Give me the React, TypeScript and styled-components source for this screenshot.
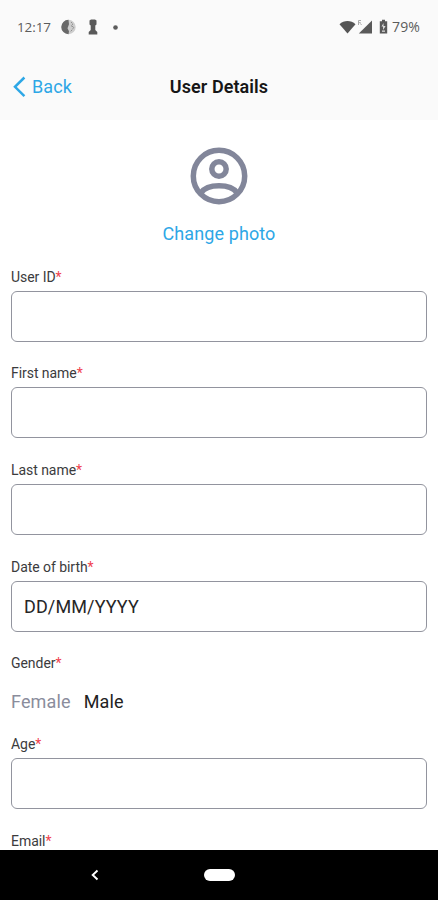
import React from "react";
import styled, { createGlobalStyle } from "styled-components";

const GlobalStyle = createGlobalStyle`
  * { box-sizing: border-box; }
  body { margin: 0; background: #fff; font-family: Roboto, sans-serif; }
`;

const Screen = styled.div`
  width: 438px;
  height: 900px;
  display: flex;
  flex-direction: column;
  overflow: hidden;
  background: #fff;
`;

const StatusBar = styled.div`
  height: 54px;
  flex: none;
  display: flex;
  align-items: center;
  justify-content: space-between;
  padding: 0 16px 0 17px;
  background: #fafafa;
  color: #5c5c5c;
  font: 500 14px/18px "Open Sans", sans-serif;
`;

const StatusGroup = styled.div`
  display: flex;
  align-items: center;
`;

const Clock = styled.span`
  width: 44px;
  font-size: 13.5px;
  letter-spacing: -0.1px;
  white-space: nowrap;
`;

const Percent = styled.span`
  width: 30px;
  margin-left: 4px;
  letter-spacing: 0.15px;
  white-space: nowrap;
`;

const StatusIcon = styled.svg<{ $gap?: number }>`
  display: block;
  flex: none;
  margin-left: ${({ $gap = 0 }) => $gap}px;
`;

const Header = styled.header`
  height: 66px;
  flex: none;
  display: grid;
  grid-template-columns: 1fr auto 1fr;
  align-items: center;
  padding: 0 12px;
  background: #fafafa;
`;

const BackButton = styled.button`
  display: flex;
  align-items: center;
  gap: 6px;
  padding: 0;
  border: 0;
  background: none;
  color: #2da7e6;
  font: 400 18px/24px Roboto, sans-serif;
  letter-spacing: 0.1px;
  justify-self: start;
`;

const Title = styled.h1`
  margin: 0;
  color: #161616;
  font: 600 18px/24px Roboto, sans-serif;
  letter-spacing: 0.08px;
`;

const Content = styled.main`
  flex: 1;
  min-height: 0;
  overflow: hidden;
  padding: 0 11px;
`;

const PhotoSection = styled.section`
  height: 147.7px;
  display: flex;
  flex-direction: column;
  align-items: center;
  padding-top: 27px;
`;

const PhotoLink = styled.button`
  margin-top: 17px;
  padding: 0;
  border: 0;
  background: none;
  color: #2da7e6;
  font: 400 18px/24px Roboto, sans-serif;
  letter-spacing: 0.1px;
`;

const Field = styled.div<{ $height?: number }>`
  height: ${({ $height = 96.7 }) => $height}px;
`;

const Label = styled.label`
  display: block;
  height: 18px;
  margin-bottom: 5px;
  padding-top: 1px;
  color: #3b3b3d;
  font-size: 14px;
  line-height: 17px;
  letter-spacing: -0.05px;
`;

const Required = styled.span`
  color: #f0424e;
`;

const Input = styled.input`
  display: block;
  width: 100%;
  height: 51px;
  padding: 1px 12px 0;
  border: 1px solid #92949e;
  border-radius: 6px;
  outline: 0;
  background: #fff;
  color: #262626;
  font: 400 18px/24px Roboto, sans-serif;
  letter-spacing: 0.12px;

  &::placeholder {
    color: #262626;
    opacity: 1;
  }
`;

const Options = styled.div`
  display: flex;
  gap: 13px;
  padding-top: 13px;
`;

const Option = styled.span<{ $selected?: boolean }>`
  color: ${({ $selected }) => ($selected ? "#222" : "#8a8d9c")};
  font-size: 18px;
  line-height: 24px;
  letter-spacing: 0.15px;
`;

const NavBar = styled.nav`
  height: 50px;
  flex: none;
  display: grid;
  grid-template-columns: 190px 58px 190px;
  align-items: center;
  justify-items: center;
  background: #000;
`;

const HomePill = styled.span`
  width: 31px;
  height: 12px;
  border-radius: 6px;
  background: #fff;
`;

type FieldProps = { name: string; placeholder?: string };

function FieldLabel({ name }: { name: string }) {
  return (
    <Label>
      {name}
      <Required>*</Required>
    </Label>
  );
}

function TextField({ name, placeholder }: FieldProps) {
  return (
    <Field>
      <FieldLabel name={name} />
      <Input placeholder={placeholder} aria-label={name} />
    </Field>
  );
}

export default function App() {
  return (
    <>
      <GlobalStyle />
      <Screen>
        <StatusBar>
          <StatusGroup>
            <Clock>12:17</Clock>
            <StatusIcon width="15" height="16" viewBox="0 0 15 16">
              <circle cx="7.5" cy="8" r="7.2" fill="#cdcdcd" />
              <path d="M7.5.8a7.200 7.200 0 0 0 0 14.400l.5-3-1.500-3 1.500-4z" fill="#686868" />
              <path d="M10 3l2 2-2 2 3 1-2 3-2 2" fill="none" stroke="#909090" strokeWidth="1" strokeDasharray="2 1" />
            </StatusIcon>
            <StatusIcon $gap={12} width="10" height="16" viewBox="0 0 10 16">
              <path d="M1.500 1.500L3 .5h4l1.500 1v4L7.300 6.500V11l2 2v2.500H.7V13l2-2V6.500L1.500 5.500z" fill="#595959" />
            </StatusIcon>
            <StatusIcon $gap={15} width="5" height="5" viewBox="0 0 5 5">
              <circle cx="2.5" cy="2.5" r="2.3" fill="#5c5c5c" />
            </StatusIcon>
          </StatusGroup>
          <StatusGroup>
            <StatusIcon width="17" height="16" viewBox="0 0 17 16">
              <path d="M.5 5.2C5 .8 12 .8 16.500 5.200L8.500 14.500z" fill="#555" />
            </StatusIcon>
            <StatusIcon $gap={1} width="16" height="16" viewBox="0 0 16 16">
              <path d="M15 1.500v13H1.800z" fill="#5a5a5a" />
              <path d="M1.500 6V1.500H4M1.500 3.700h2.200M3.500 4.500L4.500 6" fill="none" stroke="#aaa" strokeWidth="1" />
            </StatusIcon>
            <StatusIcon $gap={6} width="9" height="16" viewBox="0 0 9 16">
              <path d="M3 .8h3v1.400h2.200v12.300H.8V2.200H3z" fill="#595959" />
              <path d="M4.500 4L2.500 7.500h1.600V11l2.500-4H4.500zM3 11.500h3v1.200H3z" fill="#e0e0e0" />
            </StatusIcon>
            <Percent>79%</Percent>
          </StatusGroup>
        </StatusBar>

        <Header>
          <BackButton>
            <svg width="14" height="22" viewBox="0 0 14 22" fill="none">
              <path d="M12.400 1.500L3 10.800l9.400 9.300" stroke="#2da7e6" strokeWidth="2.500" />
            </svg>
            Back
          </BackButton>
          <Title>User Details</Title>
        </Header>

        <Content>
          <PhotoSection>
            <svg width="58" height="58" viewBox="0 0 58 58" fill="none" stroke="#82869a" strokeWidth="5.500">
              <circle cx="29" cy="29" r="25.700" />
              <circle cx="29" cy="22" r="7.200" />
              <path d="M11 45.700C17.500 36.300 40.500 36.300 47 45.700" />
            </svg>
            <PhotoLink>Change photo</PhotoLink>
          </PhotoSection>

          <TextField name="User ID" />
          <TextField name="First name" />
          <TextField name="Last name" />
          <TextField name="Date of birth" placeholder="DD/MM/YYYY" />
          <Field $height={80.5}>
            <FieldLabel name="Gender" />
            <Options>
              <Option>Female</Option>
              <Option $selected>Male</Option>
            </Options>
          </Field>
          <TextField name="Age" />
          <TextField name="Email" />
        </Content>

        <NavBar>
          <svg width="10" height="12" viewBox="0 0 10 12" fill="none">
            <path d="M7.500 1.500L2.700 6l4.800 4.500" stroke="#fff" strokeWidth="1.900" />
          </svg>
          <HomePill />
        </NavBar>
      </Screen>
    </>
  );
}
